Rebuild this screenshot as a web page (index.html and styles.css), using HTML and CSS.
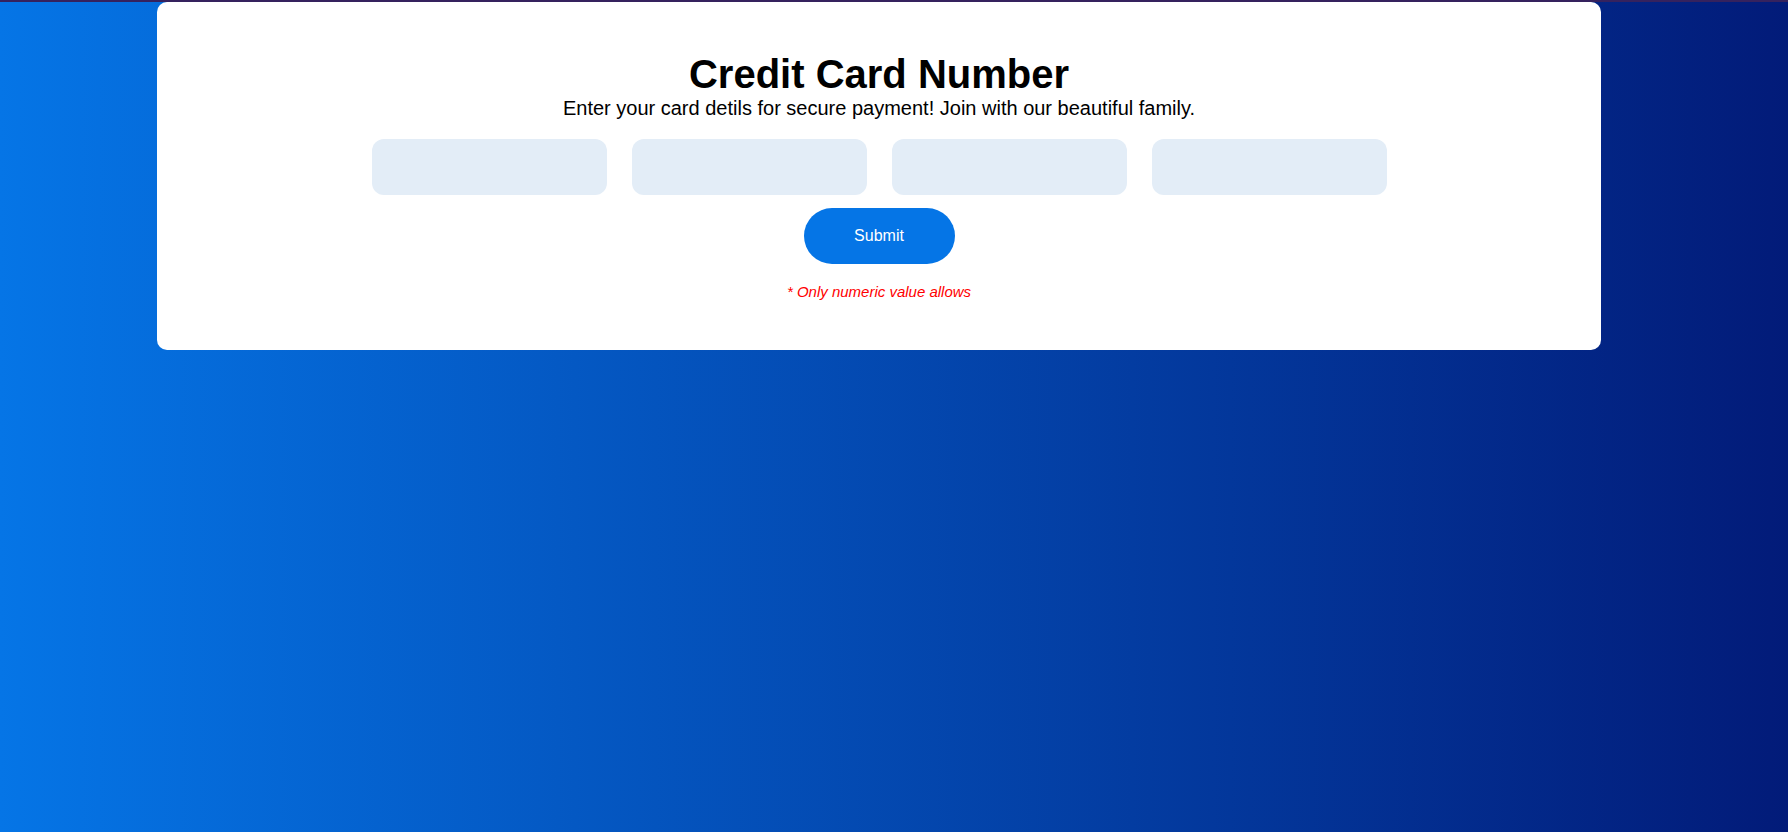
FILE: index.html
```html
<!DOCTYPE html>
<html lang="en">
<head>
<meta charset="utf-8">
<title>Credit Card Number</title>
<link rel="stylesheet" href="styles.css">
</head>
<body>
<div class="page">
  <main class="card">
    <h1 class="title">Credit Card Number</h1>
    <p class="subtitle">Enter your card detils for secure payment! Join with our beautiful family.</p>
    <form class="form">
      <div class="fields">
        <input class="field" type="text" maxlength="4">
        <input class="field" type="text" maxlength="4">
        <input class="field" type="text" maxlength="4">
        <input class="field" type="text" maxlength="4">
      </div>
      <button class="submit" type="button">Submit</button>
      <p class="note">* Only numeric value allows</p>
    </form>
  </main>
</div>
</body>
</html>
```

FILE: styles.css
```css
html, body {
  margin: 0;
  padding: 0;
}

body {
  min-height: 100vh;
  box-sizing: border-box;
  border-top: 2px solid #35225e;
  background: linear-gradient(to right, #0575e6, #021b79);
  font-family: "Liberation Sans", Arial, sans-serif;
}

.page {
  padding: 0 187px 0 157px;
}

.card {
  background: #ffffff;
  border-radius: 10px;
  padding: 49px 0 50px;
  text-align: center;
  color: #000;
}

.title {
  margin: 0;
  font-size: 40px;
  line-height: 46px;
  font-weight: bold;
}

.subtitle {
  margin: 0;
  font-size: 20px;
  line-height: 23px;
}

.form {
  margin-top: 19px;
  display: flex;
  flex-direction: column;
  align-items: center;
}

.fields {
  display: flex;
  gap: 25px;
  justify-content: center;
}

.field {
  width: 235px;
  height: 56px;
  box-sizing: border-box;
  border: none;
  border-radius: 12px;
  background: #e3edf7;
  outline: none;
  padding: 0 12px;
  font-family: inherit;
  font-size: 18px;
}

.submit {
  margin-top: 13px;
  width: 151px;
  height: 56px;
  border: none;
  border-radius: 28px;
  background: #0575e6;
  color: #ffffff;
  font-family: inherit;
  font-size: 16px;
  cursor: pointer;
}

.note {
  margin: 20px 0 0;
  font-size: 15px;
  line-height: 16px;
  font-style: italic;
  color: #ff0000;
}
```
